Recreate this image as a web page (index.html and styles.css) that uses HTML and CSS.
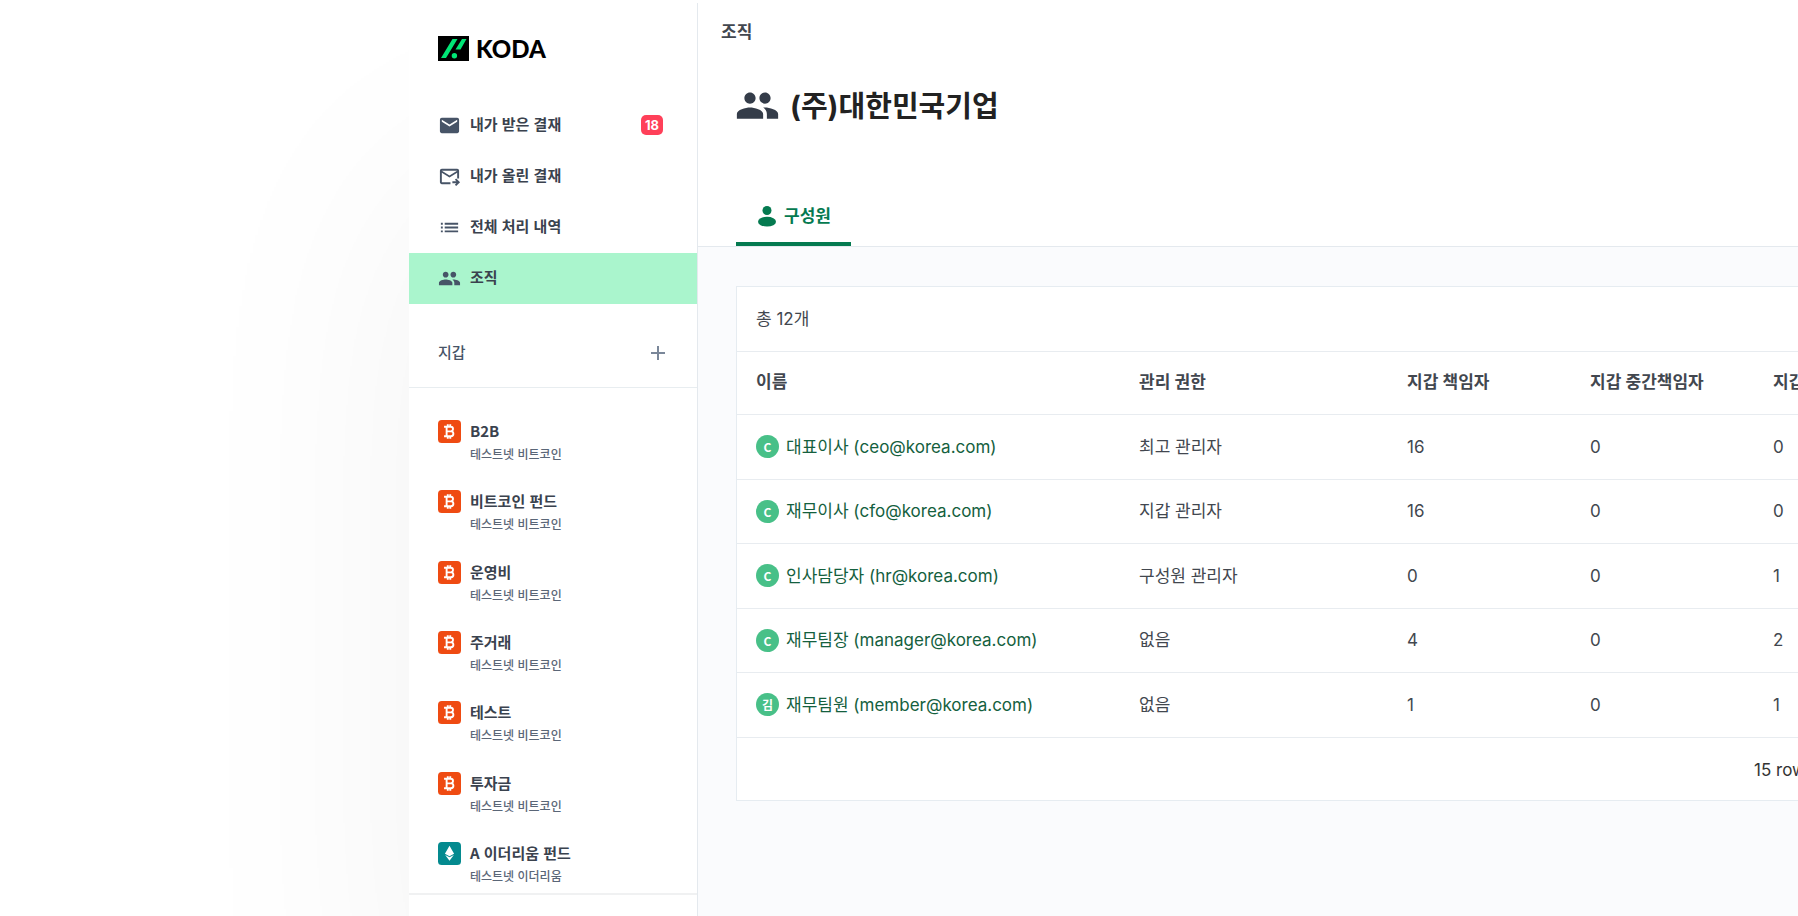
FILE: index.html
```html
<!DOCTYPE html>
<html lang="ko">
<head>
<meta charset="utf-8">
<title>KODA</title>
<link rel="stylesheet" href="styles.css">
</head>
<body>
<svg class="defs" aria-hidden="true">
  <symbol id="people" viewBox="0 0 24 24"><path d="M8 11c1.66 0 2.99-1.34 2.99-3S9.66 5 8 5 5 6.340 5 8s1.340 3 3 3zm8 0c1.660 0 2.990-1.340 2.990-3S17.660 5 16 5s-3 1.340-3 3 1.340 3 3 3zM8 13c-2.330 0-7 1.170-7 3.500V19h14v-2.500c0-2.330-4.670-3.500-7-3.500zm8 0c-.29 0-.62.020-.97.050 1.160.84 1.970 1.970 1.970 3.450V19h6v-2.500c0-2.330-4.670-3.500-7-3.500z"/></symbol>
  <symbol id="mail" viewBox="0 0 24 24"><path d="M20 4H4c-1.100 0-1.990.9-1.990 2L2 18c0 1.100.9 2 2 2h16c1.100 0 2-.9 2-2V6c0-1.100-.9-2-2-2zm0 4-8 5-8-5V6l8 5 8-5v2z"/></symbol>
  <symbol id="sent" viewBox="0 0 24 24"><path d="M4 20c-1.100 0-2-.9-2-2V6c0-1.100.9-2 2-2h16c1.100 0 2 .9 2 2v8h-2V8l-8 5-8-5v10h9v2H4zm8-9 8-5H4l8 5zm7 11-1.400-1.400 1.600-1.600H15v-2h4.200l-1.600-1.600L19 14l4 4-4 4z"/></symbol>
  <symbol id="list" viewBox="0 0 24 24"><path d="M3 7h2v2H3zm0 4h2v2H3zm0 4h2v2H3zM7 7h14v2H7zm0 4h14v2H7zm0 4h14v2H7z"/></symbol>
  <symbol id="btc" viewBox="0 0 24 24"><rect width="24" height="24" rx="4" fill="#ef4b12"/><path d="M6.300 7h6.900a2.400 2.400 0 0 1 0 4.900H9m4.500 0a2.550 2.550 0 0 1 0 5.100H6.300M9 7v10M10.200 4.500V7m2.600-2.500V7m-2.600 10v2.500m2.600-2.500v2.500" fill="none" stroke="#fff" stroke-width="2"/></symbol>
  <symbol id="eth" viewBox="0 0 24 24"><rect width="24" height="24" rx="4" fill="#048a8f"/><path d="m12 4 4.800 8.200-4.800 2.600-4.800-2.600zM7.500 13.500l4.500 2.500 4.500-2.500L12 19.500z" fill="#fff"/></symbol>
</svg>
<div class="app">
  <aside class="sidebar">
    <a class="logo" href="#">
      <svg viewBox="0 0 31 25" aria-hidden="true"><path d="M0 0h31v25H0z"/><path fill="#00e676" d="M14.500 3h5L8 22H3zM24 3h4.500l-6 10.500h-5zM13.700 19.800a2.700 2.700 0 1 1 5.400 0 2.700 2.700 0 1 1-5.400 0z"/></svg>
      <span>KODA</span>
    </a>
    <nav class="menu">
      <a href="#"><svg><use href="#mail"/></svg><span>내가 받은 결재</span><b class="badge">18</b></a>
      <a href="#"><svg><use href="#sent"/></svg><span>내가 올린 결재</span></a>
      <a href="#"><svg><use href="#list"/></svg><span>전체 처리 내역</span></a>
      <a href="#" class="active"><svg><use href="#people"/></svg><span>조직</span></a>
    </nav>
    <div class="wallet-head">
      <span>지갑</span>
      <button aria-label="지갑"><svg viewBox="0 0 24 24"><path d="M19 13h-6v6h-2v-6H5v-2h6V5h2v6h6z"/></svg></button>
    </div>
    <ul class="wallets">
      <li><svg><use href="#btc"/></svg><a href="#"><strong>B2B</strong><small>테스트넷 비트코인</small></a></li>
      <li><svg><use href="#btc"/></svg><a href="#"><strong>비트코인 펀드</strong><small>테스트넷 비트코인</small></a></li>
      <li><svg><use href="#btc"/></svg><a href="#"><strong>운영비</strong><small>테스트넷 비트코인</small></a></li>
      <li><svg><use href="#btc"/></svg><a href="#"><strong>주거래</strong><small>테스트넷 비트코인</small></a></li>
      <li><svg><use href="#btc"/></svg><a href="#"><strong>테스트</strong><small>테스트넷 비트코인</small></a></li>
      <li><svg><use href="#btc"/></svg><a href="#"><strong>투자금</strong><small>테스트넷 비트코인</small></a></li>
      <li><svg><use href="#eth"/></svg><a href="#"><strong>A 이더리움 펀드</strong><small>테스트넷 이더리움</small></a></li>
    </ul>
    <div class="side-foot"></div>
  </aside>
  <main class="main">
    <header class="head">
      <div class="crumb">조직</div>
      <h1><svg><use href="#people"/></svg><span>(주)대한민국기업</span></h1>
      <div class="tabs" role="tablist">
        <button role="tab" aria-selected="true"><svg viewBox="0 0 18 21"><circle cx="9" cy="4.500" r="4.500"/><ellipse cx="9" cy="15.700" rx="9" ry="4.900"/></svg>구성원</button>
      </div>
    </header>
    <section class="card">
      <div class="total">총 12개</div>
      <table>
        <colgroup><col class="c-name"><col class="c-role"><col class="c-num"><col class="c-num"><col></colgroup>
        <thead><tr><th>이름</th><th>관리 권한</th><th>지갑 책임자</th><th>지갑 중간책임자</th><th>지갑</th></tr></thead>
        <tbody>
          <tr><td><a href="#"><i>C</i>대표이사 (ceo@korea.com)</a></td><td>최고 관리자</td><td>16</td><td>0</td><td>0</td></tr>
          <tr><td><a href="#"><i>C</i>재무이사 (cfo@korea.com)</a></td><td>지갑 관리자</td><td>16</td><td>0</td><td>0</td></tr>
          <tr><td><a href="#"><i>C</i>인사담당자 (hr@korea.com)</a></td><td>구성원 관리자</td><td>0</td><td>0</td><td>1</td></tr>
          <tr><td><a href="#"><i>C</i>재무팀장 (manager@korea.com)</a></td><td>없음</td><td>4</td><td>0</td><td>2</td></tr>
          <tr><td><a href="#"><i>김</i>재무팀원 (member@korea.com)</a></td><td>없음</td><td>1</td><td>0</td><td>1</td></tr>
        </tbody>
      </table>
      <div class="pager">15 rows</div>
    </section>
  </main>
</div>
</body>
</html>
```
FILE: styles.css
```css
* { box-sizing: border-box; }
body {
  margin: 0;
  background: #fff;
  font-family: Inter, "Noto Sans CJK KR", sans-serif;
  font-size: 17px;
  line-height: 24px;
  color: #42474f;
  overflow: hidden;
}
a { color: inherit; text-decoration: none; }
button { border: 0; background: none; padding: 0; font: inherit; color: inherit; }
svg { fill: currentColor; flex: none; display: block; }
.defs { position: absolute; width: 0; height: 0; }

.app {
  display: flex;
  height: calc(100vh - 3px);
  margin: 3px 0 0 409px;
  box-shadow: 0 180px 240px rgba(0, 0, 0, 0.05);
}

.sidebar {
  flex: none;
  width: 289px;
  display: flex;
  flex-direction: column;
  background: #fff;
  border-right: 1px solid #e4e9ee;
  font-family: "Noto Sans CJK KR", sans-serif;
  font-size: 15px;
  color: #3a424e;
}
.logo {
  display: flex;
  align-items: center;
  gap: 7px;
  height: 25px;
  margin: 33px 29px 39px;
  font: 900 24px/24px Lato, sans-serif;
  color: #000;
}
.logo svg { width: 31px; height: 25px; }
.menu a {
  display: flex;
  align-items: center;
  gap: 9px;
  height: 51px;
  padding: 0 34px 1px 29px;
  font-weight: 600;
}
.menu span { padding-bottom: 2px; }
.menu svg { width: 23px; height: 23px; color: #475467; }
.menu .active { background: #aaf5cd; }
.badge {
  margin-left: auto;
  width: 22px;
  border-radius: 5px;
  background: #ff4059;
  color: #fff;
  font: bold 13px/20px Inter, sans-serif;
  text-align: center;
}
.wallet-head {
  display: flex;
  justify-content: space-between;
  align-items: center;
  height: 84px;
  padding: 14px 27px 0 29px;
  border-bottom: 1px solid #e8edf0;
  font-weight: 500;
  color: #475467;
}
.wallet-head span { padding-bottom: 2px; }
.wallet-head svg { width: 24px; height: 24px; color: #7a8799; }
.wallets {
  flex: 1;
  display: flex;
  flex-direction: column;
  justify-content: space-between;
  list-style: none;
  margin: 0;
  padding: 32px 29px 5px;
}
.wallets li { display: flex; gap: 9px; }
.wallets svg { width: 23px; height: 23px; }
.wallets strong { display: block; line-height: 22px; font-weight: 600; }
.wallets small { display: block; line-height: 24px; font-size: 12px; font-weight: 500; color: #5a6677; }
.side-foot { height: 23px; border-top: 2px solid #f0f1f2; }

.main { flex: 1; min-width: 0; overflow: hidden; background: #fafbfd; }
.head { background: #fff; border-bottom: 1px solid #e4e9ee; }
.crumb { padding: 17px 23px 15px; font-weight: 600; }
h1 {
  display: flex;
  align-items: center;
  gap: 10px;
  margin: 0;
  padding: 24px 37px 0;
  font-size: 29px;
  line-height: 43px;
  color: #222;
}
h1 span { padding-top: 2px; }
h1 svg { width: 45px; height: 45px; color: #343c49; }
.tabs { padding: 60px 38px 0; }
.tabs button {
  display: flex;
  align-items: center;
  gap: 8px;
  height: 58px;
  padding: 2px 20px 0 22px;
  border-bottom: 4px solid #057a50;
  color: #057a50;
  font-weight: 600;
}
.tabs svg { width: 18px; height: 21px; }

.card {
  min-width: 1200px;
  margin: 39px 38px;
  border: 1px solid #e6ecf1;
  background: #fff;
}
.total { padding: 20px 19px; }
table { width: 100%; table-layout: fixed; border-collapse: separate; border-spacing: 0; }
.c-name { width: 383px; }
.c-role { width: 268px; }
.c-num { width: 183px; }
th, td { padding: 0 19px 1px; text-align: left; white-space: nowrap; border-top: 1px solid #e8ecf0; }
th { height: 63px; padding-bottom: 3px; font-weight: 600; }
td { height: 65px; }
tr:nth-child(even) td { height: 64px; }
td a { display: flex; align-items: center; gap: 7px; color: #14603e; }
td i {
  width: 23px;
  border-radius: 50%;
  background: #48c088;
  color: #fff;
  font: bold 12px/23px "Noto Sans CJK KR", sans-serif;
  text-align: center;
}
.pager { padding: 20px 120px 18px; border-top: 1px solid #e8ecf0; text-align: right; color: #333; }
```
